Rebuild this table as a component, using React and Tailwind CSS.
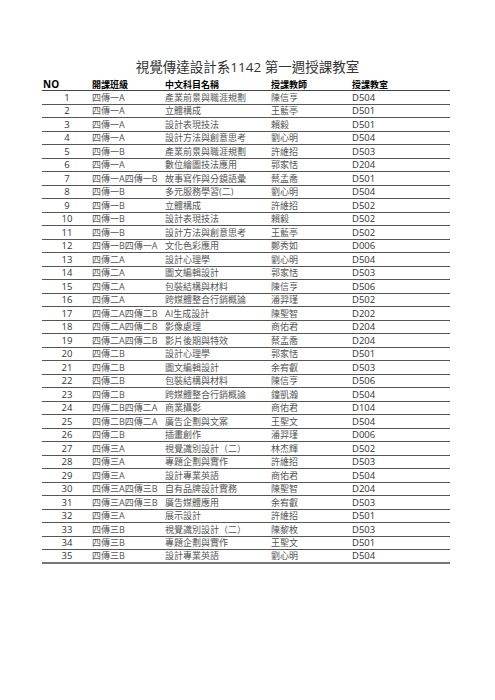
import React from 'react';

const rows = [
    ['1', '四傳一A', '產業前景與職涯規劃', '陳信亨', 'D504'],
    ['2', '四傳一A', '立體構成', '王藍亭', 'D501'],
    ['3', '四傳一A', '設計表現技法', '賴毅', 'D501'],
    ['4', '四傳一A', '設計方法與創意思考', '劉心明', 'D504'],
    ['5', '四傳一B', '產業前景與職涯規劃', '許維招', 'D503'],
    ['6', '四傳一A', '數位繪圖技法應用', '郭家恬', 'D204'],
    ['7', '四傳一A四傳一B', '故事寫作與分鏡語彙', '蔡孟喬', 'D501'],
    ['8', '四傳一B', '多元服務學習(二)', '劉心明', 'D504'],
    ['9', '四傳一B', '立體構成', '許維招', 'D502'],
    ['10', '四傳一B', '設計表現技法', '賴毅', 'D502'],
    ['11', '四傳一B', '設計方法與創意思考', '王藍亭', 'D502'],
    ['12', '四傳一B四傳一A', '文化色彩應用', '鄭秀如', 'D006'],
    ['13', '四傳二A', '設計心理學', '劉心明', 'D504'],
    ['14', '四傳二A', '圖文編輯設計', '郭家恬', 'D503'],
    ['15', '四傳二A', '包裝結構與材料', '陳信亨', 'D506'],
    ['16', '四傳二A', '跨媒體整合行銷概論', '潘羿瑾', 'D502'],
    ['17', '四傳二A四傳二B', 'AI生成設計', '陳聖智', 'D202'],
    ['18', '四傳二A四傳二B', '影像處理', '商佑君', 'D204'],
    ['19', '四傳二A四傳二B', '影片後期與特效', '蔡孟喬', 'D204'],
    ['20', '四傳二B', '設計心理學', '郭家恬', 'D501'],
    ['21', '四傳二B', '圖文編輯設計', '余宥叡', 'D503'],
    ['22', '四傳二B', '包裝結構與材料', '陳信亨', 'D506'],
    ['23', '四傳二B', '跨媒體整合行銷概論', '鐘凱瀚', 'D504'],
    ['24', '四傳二B四傳二A', '商業攝影', '商佑君', 'D104'],
    ['25', '四傳二B四傳二A', '廣告企劃與文案', '王聖文', 'D504'],
    ['26', '四傳二B', '插畫創作', '潘羿瑾', 'D006'],
    ['27', '四傳三A', '視覺識別設計（二）', '林杰輝', 'D502'],
    ['28', '四傳三A', '專題企劃與實作', '許維招', 'D503'],
    ['29', '四傳三A', '設計專業英語', '商佑君', 'D504'],
    ['30', '四傳三A四傳三B', '自有品牌設計實務', '陳聖智', 'D204'],
    ['31', '四傳三A四傳三B', '廣告媒體應用', '余宥叡', 'D503'],
    ['32', '四傳三A', '展示設計', '許維招', 'D501'],
    ['33', '四傳三B', '視覺識別設計（二）', '陳黎枚', 'D503'],
    ['34', '四傳三B', '專題企劃與實作', '王聖文', 'D501'],
    ['35', '四傳三B', '設計專業英語', '劉心明', 'D504'],
];

const cols = 'grid grid-cols-[50px_73px_106px_81px_98px] items-center';

export default function App() {
    return (
        <div
            className="w-[495px] h-[700px] bg-white pt-[57px]"
            style={{ fontFamily: '"Open Sans", "Noto Sans CJK TC", sans-serif' }}
        >
            <h1 className="h-[20px] leading-[20px] text-center text-[13.5px] text-[#333]">
                視覺傳達設計系1142 第一週授課教室
            </h1>
            <div className="ml-[42px] w-[408px]">
                <div className={`${cols} h-[14px] border-b border-[#444] text-[9px] font-bold text-black`}>
                    <div className="pl-[1px] text-[10px]">NO</div>
                    <div>開課班級</div>
                    <div>中文科目名稱</div>
                    <div>授課教師</div>
                    <div>授課教室</div>
                </div>
                {rows.map((r, i) => (
                    <div
                        key={i}
                        className={`${cols} h-[13.5px] leading-none text-[9px] text-[#555] ${i === rows.length - 1 ? 'border-b-2 border-[#777]' : 'border-b border-[#555]'
                            }`}
                    >
                        <div className="text-center text-[9.5px] text-[#333]">{r[0]}</div>
                        <div className="whitespace-nowrap">{r[1]}</div>
                        <div className="whitespace-nowrap">{r[2]}</div>
                        <div>{r[3]}</div>
                        <div className="text-[9.5px] text-[#333]">{r[4]}</div>
                    </div>
                ))}
            </div>
        </div>
    );
}
